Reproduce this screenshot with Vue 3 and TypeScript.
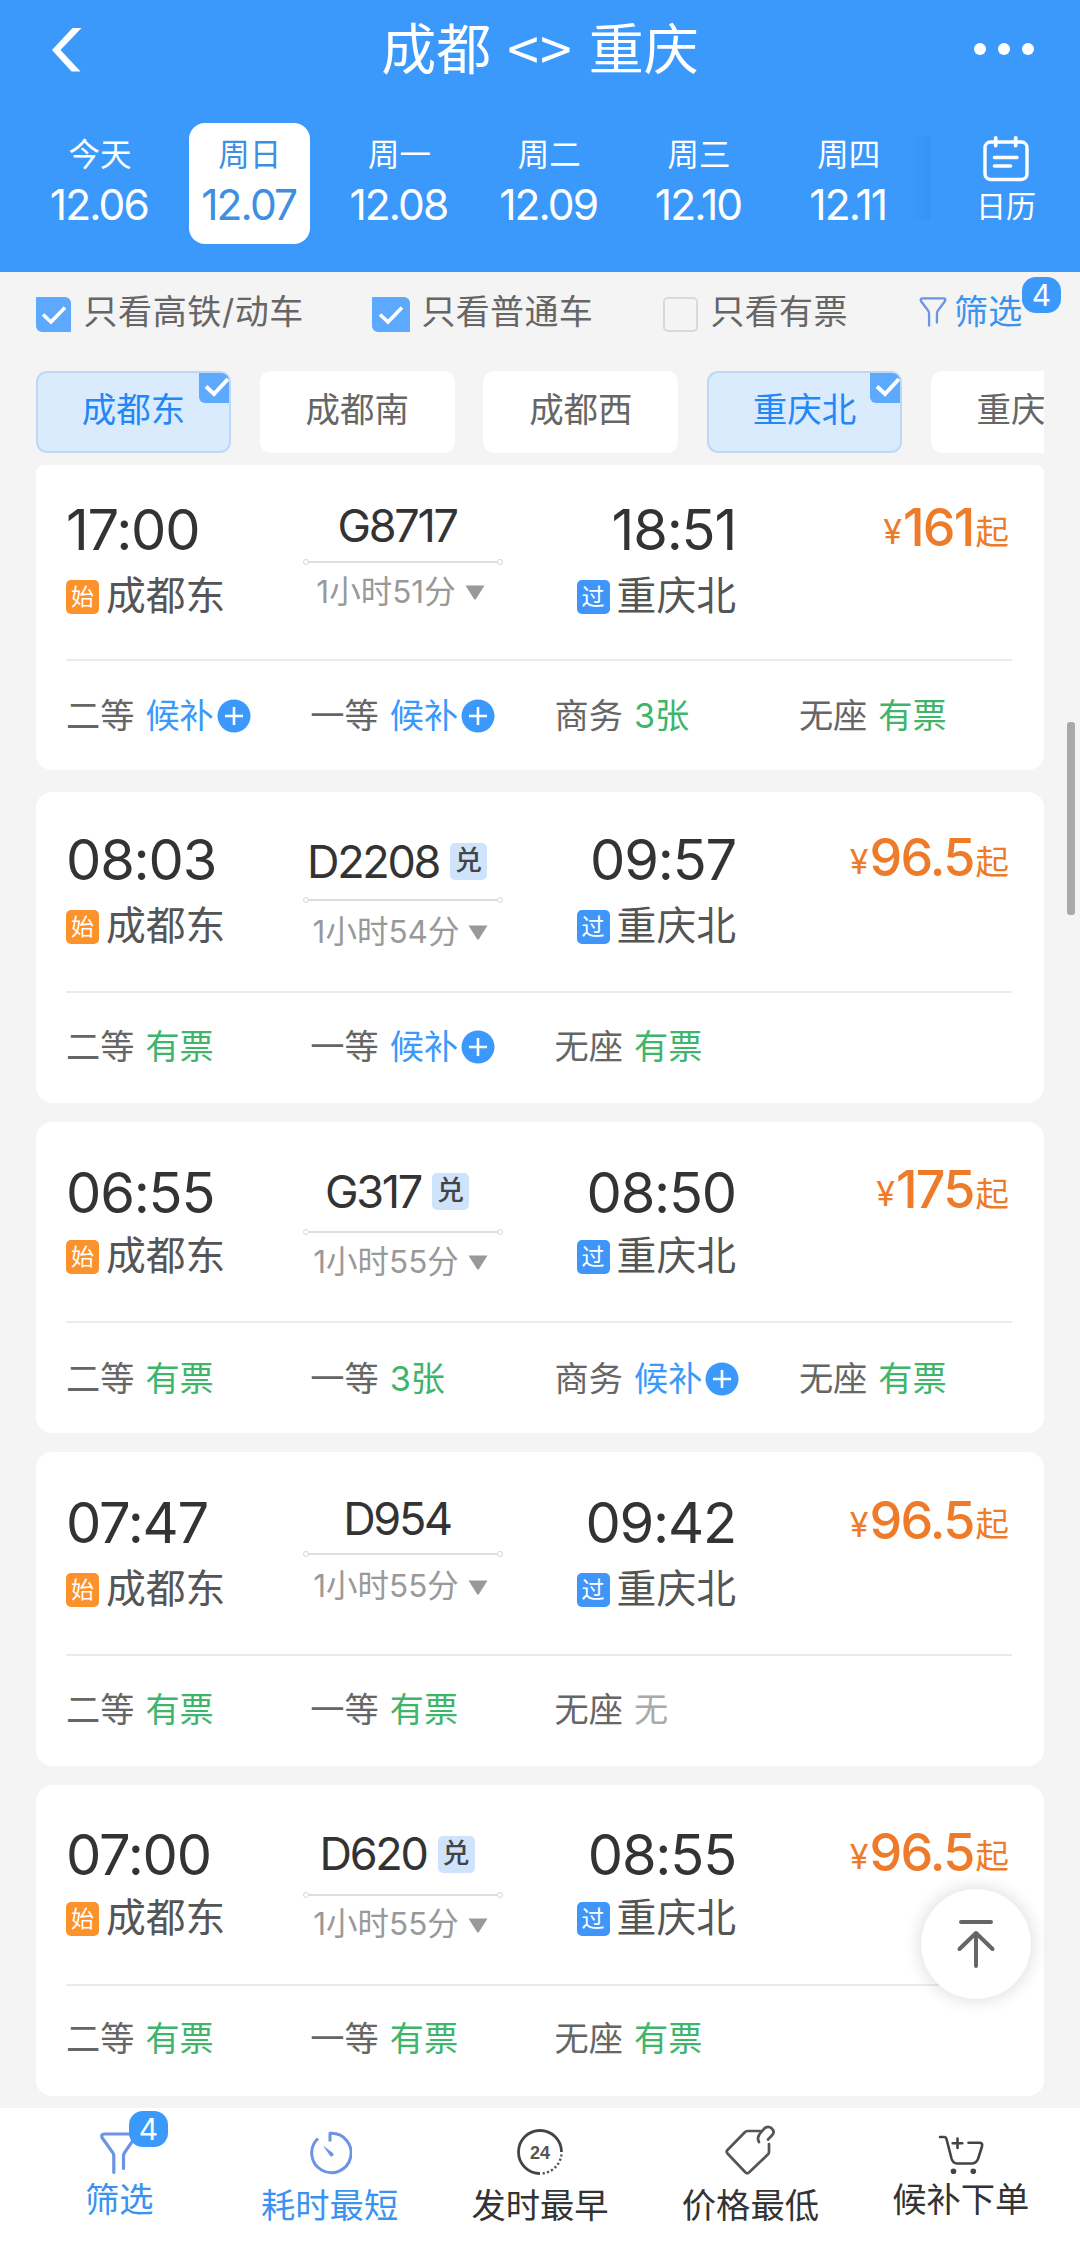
<script setup lang="ts">
interface Seat {
  name: string
  state: 'ok' | 'wait' | 'none'
  label: string
}
interface Train {
  code: string
  redeem: boolean
  depart: string
  arrive: string
  duration: string
  price: string
  seats: Seat[]
}

const ok = (name: string, label = '有票'): Seat => ({ name, state: 'ok', label })
const wait = (name: string): Seat => ({ name, state: 'wait', label: '候补' })
const none = (name: string): Seat => ({ name, state: 'none', label: '无' })

const days = [
  { week: '今天', date: '12.06' },
  { week: '周日', date: '12.07', active: true },
  { week: '周一', date: '12.08' },
  { week: '周二', date: '12.09' },
  { week: '周三', date: '12.10' },
  { week: '周四', date: '12.11' },
]

const stations = [
  { name: '成都东', active: true },
  { name: '成都南' },
  { name: '成都西' },
  { name: '重庆北', active: true },
  { name: '重庆西' },
]

const trains: Train[] = [
  { code: 'G8717', redeem: false, depart: '17:00', arrive: '18:51', duration: '1小时51分', price: '161', seats: [wait('二等'), wait('一等'), ok('商务', '3张'), ok('无座')] },
  { code: 'D2208', redeem: true, depart: '08:03', arrive: '09:57', duration: '1小时54分', price: '96.5', seats: [ok('二等'), wait('一等'), ok('无座')] },
  { code: 'G317', redeem: true, depart: '06:55', arrive: '08:50', duration: '1小时55分', price: '175', seats: [ok('二等'), ok('一等', '3张'), wait('商务'), ok('无座')] },
  { code: 'D954', redeem: false, depart: '07:47', arrive: '09:42', duration: '1小时55分', price: '96.5', seats: [ok('二等'), ok('一等'), none('无座')] },
  { code: 'D620', redeem: true, depart: '07:00', arrive: '08:55', duration: '1小时55分', price: '96.5', seats: [ok('二等'), ok('一等'), ok('无座')] },
]
</script>

<template>
  <div class="page">
    <header class="header">
      <div class="titlebar">
        <svg class="back" width="30" height="44" viewBox="0 0 30 44"><path d="M20.500 0H29.500L8.500 22 28.500 43.500H19.500L0 22z" fill="#fff" /></svg>
        <h1 class="title"><span>成都</span><span class="swap">&lt;&gt;</span><span>重庆</span></h1>
        <div class="more"><i /><i /><i /></div>
      </div>
      <div class="daybar">
        <div class="days">
          <div v-for="d in days" :key="d.date" class="day" :class="{ active: d.active }">
            <span class="week">{{ d.week }}</span>
            <span class="date">{{ d.date }}</span>
          </div>
        </div>
        <div class="edge" />
        <div class="calendar">
          <svg width="46" height="46" viewBox="0 0 46 46" fill="none" stroke="#fff" stroke-linecap="round">
            <rect x="2" y="6" width="42" height="37.500" rx="5.500" stroke-width="3.400" />
            <path d="M12.700 2v7.500M32.700 2v7.500" stroke-width="3.800" />
            <path d="M11.500 21.500H34M11.500 30H27.500" stroke-width="3.600" />
          </svg>
          <span>日历</span>
        </div>
      </div>
    </header>

    <div class="filters">
      <label class="option first"><span class="box on"><svg width="26" height="20" viewBox="0 0 26 20"><path d="M2 9.500 10 17 24 2.500" fill="none" stroke="#fff" stroke-width="3.600" /></svg></span>只看高铁/动车</label>
      <label class="option second"><span class="box on wide"><svg width="26" height="20" viewBox="0 0 26 20"><path d="M2 9.500 10 17 24 2.500" fill="none" stroke="#fff" stroke-width="3.600" /></svg></span>只看普通车</label>
      <label class="option third"><span class="box" />只看有票</label>
      <div class="filter-link">
        <svg width="28" height="30" viewBox="0 0 38 42" fill="none" stroke="#6b93e6" stroke-width="3.200" stroke-linecap="round" stroke-linejoin="round"><path d="M13.500 40V23Q13.500 21 12.300 19.300L2.300 6Q.500 2 4.500 2H33.500Q37.500 2 35.700 6L25.700 19.300Q24.500 21 24.500 23V36" /></svg>
        <span>筛选</span>
        <b class="count">4</b>
      </div>
    </div>

    <div class="chips">
      <div v-for="s in stations" :key="s.name" class="chip" :class="{ active: s.active }">
        {{ s.name }}
        <span v-if="s.active" class="corner"><svg width="25" height="20" viewBox="0 0 25 20"><path d="M2 8.500 10 16 24 1" fill="none" stroke="#fff" stroke-width="4" /></svg></span>
      </div>
    </div>

    <main class="list">
      <article v-for="t in trains" :key="t.code" class="card">
        <div class="trip">
          <div class="end depart">
            <div class="time">{{ t.depart }}</div>
            <div class="station"><span class="mark start">始</span>成都东</div>
          </div>
          <div class="middle">
            <div class="code">{{ t.code }}<span v-if="t.redeem" class="redeem">兑</span></div>
            <div class="rule"><i /><u /><i /></div>
            <div class="duration">{{ t.duration }}<svg width="20" height="15" viewBox="0 0 20 15"><path d="M.5.5h19L11 14q-1 1-2 0z" fill="#999" /></svg></div>
          </div>
          <div class="end arrive">
            <div class="time">{{ t.arrive }}</div>
            <div class="station"><span class="mark pass">过</span>重庆北</div>
          </div>
          <div class="price"><span class="yen">¥</span><span class="amount">{{ t.price }}</span><span class="from">起</span></div>
        </div>
        <div class="seats">
          <div v-for="s in t.seats" :key="s.name" class="seat">
            <span>{{ s.name }}</span>
            <span :class="s.state">{{ s.label }}</span>
            <svg v-if="s.state === 'wait'" width="34" height="34" viewBox="0 0 34 34"><circle cx="17" cy="17" r="16.500" fill="#3b99fc" /><path d="M17 8v18M8 17h18" stroke="#fff" stroke-width="2.600" /></svg>
          </div>
        </div>
      </article>
    </main>

    <nav class="tabbar">
      <div class="tab blue high">
        <svg width="38" height="43" viewBox="0 0 38 43" fill="none" stroke="#6b93e6" stroke-width="3.200" stroke-linecap="round" stroke-linejoin="round"><path d="M13.800 40.500V24Q13.800 22 12.600 20.300L2.300 6Q.500 2 4.500 2H32.500Q36.500 2 34.700 6L24.700 20.300Q23.500 22 23.500 24V36.500" /></svg>
        <span>筛选</span>
        <b class="count">4</b>
      </div>
      <div class="tab blue">
        <svg width="44" height="44" viewBox="0 0 44 44" fill="none" stroke="#6b93e6" stroke-width="3"><path d="M22 10.500V2.300A19.700 19.700 0 1 1 10 7.500" stroke-linejoin="round" /><path d="M15 14.500 25.500 22.500Q26 25.500 22.500 25.500Z" fill="#6b93e6" stroke="none" /></svg>
        <span>耗时最短</span>
      </div>
      <div class="tab">
        <svg width="46" height="46" viewBox="0 0 46 46"><path d="M23 44.500A21.500 21.500 0 1 1 44.500 23" fill="none" stroke="#444" stroke-width="2.800" /><path d="M44.500 25.500A21.500 21.500 0 0 1 24 44.500" fill="none" stroke="#555" stroke-width="2.400" stroke-dasharray="2.200 2.200" /><text x="23" y="29.500" text-anchor="middle" class="hours">24</text></svg>
        <span>发时最早</span>
      </div>
      <div class="tab">
        <svg width="50" height="50" viewBox="0 0 50 50" fill="none" stroke="#555" stroke-width="2.700" stroke-linecap="round" stroke-linejoin="round"><path d="M35.500 6H22.500Q21 6 19.800 7.200L2.500 25Q.800 26.800 2.500 28.500L20.500 47.500Q22.300 49 24 47.500L42.800 29.500Q44 28.500 44 27V19" /><path d="M34 17Q31.500 13 35 8.500L39 3.800Q42.500.200 46.500 3.200 50.200 6.500 47.300 10L43 14.500" /></svg>
        <span>价格最低</span>
      </div>
      <div class="tab high">
        <svg width="46" height="40" viewBox="0 0 46 40" fill="none" stroke="#444" stroke-width="2.600" stroke-linecap="round" stroke-linejoin="round"><path d="M2 2H6Q8 2 8.500 4L13.500 23.500Q15 28.500 19 28.500H33.500Q38 28.500 40 24L44 11.500Q45 7.800 41.500 7.800H30.500M19.500 3.500V13M14.700 8.200H24.300" /><circle cx="15.500" cy="36.300" r="2.800" fill="#444" stroke="none" /><circle cx="35.300" cy="36.300" r="2.800" fill="#444" stroke="none" /></svg>
        <span>候补下单</span>
      </div>
    </nav>

    <div class="to-top">
      <svg width="40" height="50" viewBox="0 0 40 50" fill="none" stroke="#666" stroke-width="4" stroke-linecap="round" stroke-linejoin="round"><path d="M5 3H35M20 14V47M3.500 30 20 14 36.500 30" /></svg>
    </div>
    <div class="scrollbar" />
  </div>
</template>

<style>
body {
  margin: 0;
  background: #f4f4f4;
}
</style>

<style scoped>
.page {
  position: relative;
  display: flex;
  flex-direction: column;
  width: 1080px;
  height: 2245px;
  overflow: hidden;
  background: #f4f4f4;
  color: #555;
  font-family: Inter, "Noto Sans CJK SC", sans-serif;
  white-space: nowrap;
}
.page * { box-sizing: border-box; }
svg { display: block; flex: none; }

.header { flex: none; height: 272px; background: #3b99fc; color: #fff; }
.titlebar { display: flex; align-items: center; height: 98px; padding: 0 46px 0 52px; }
.back { margin-top: 1px; }
.title { display: flex; flex: 1; justify-content: center; gap: 16px; margin: 0 0 0 24px; font-size: 55px; font-weight: 400; line-height: 60px; }
.swap { font-family: "Noto Sans CJK SC", sans-serif; font-size: 57px; line-height: 55px; letter-spacing: 1px; }
.more { display: flex; gap: 12px; }
.more i { width: 12px; height: 12px; border-radius: 50%; background: #fff; }
.daybar { display: flex; padding-top: 25px; }
.days { display: flex; flex: none; width: 899px; margin-left: 25px; }
.day { display: flex; flex-direction: column; align-items: center; width: 121px; height: 121px; margin: 0 14.400px; border-radius: 16px; }
.day.active { background: #fff; color: #3e8fdf; }
.week { margin-top: 16px; font-size: 31.500px; line-height: 32px; }
.date { margin: 12px 2px 0 0; font-size: 42.500px; line-height: 44px; letter-spacing: -1.900px; }
.edge { flex: none; width: 18px; height: 84px; margin: 13px 0 0 -12px; background: linear-gradient(to right, rgba(40, 120, 215, 0), rgba(40, 120, 215, .2)); }
.calendar { display: flex; flex-direction: column; align-items: center; width: 106px; margin: 13px 0 0 23px; font-size: 30px; line-height: 32px; }
.calendar span { margin-top: 8px; }

.filters { display: flex; align-items: center; flex: none; height: 80px; padding: 0 18px 0 36px; font-size: 34px; line-height: 40px; letter-spacing: .300px; color: #666; margin-bottom: 19px; }
.option { display: flex; align-items: center; flex: none; }
.option.first { width: 336px; letter-spacing: .600px; }
.option.second { width: 291px; }
.option.third { width: 257px; }
.box { display: flex; align-items: center; justify-content: center; flex: none; width: 35px; height: 35px; margin: 5px 12.500px 0 0; border: 2px solid #d9d9d9; border-radius: 5px; }
.box.on { border: 0; border-radius: 1px 6px 1px 6px; background: #5ca9fd; }
.box.wide { width: 38px; margin-right: 11.500px; }
.count { display: flex; align-items: center; justify-content: center; width: 39px; height: 36px; border-radius: 14px; background: #3b99fc; color: #fff; font-size: 30px; font-weight: 400; line-height: 34px; }
.filter-link { position: relative; display: flex; align-items: center; gap: 7px; margin-left: -1px; color: #3b93ee; }
.filter-link .count { position: absolute; left: 103px; top: -15px; }

.chips { display: flex; flex: none; gap: 28.700px; width: 1008px; height: 82px; margin: 0 0 12px 36px; overflow: hidden; }
.chip { position: relative; flex: none; width: 195px; height: 82px; border-radius: 11px; background: #fff; color: #666; font-size: 34.500px; line-height: 77px; text-align: center; }
.chip.active { border: 2px solid #bdd8f5; background: #dbebfe; color: #2387f5; line-height: 73px; }
.corner { position: absolute; top: 0; right: 0; width: 30px; height: 30px; padding: 5px 0 0 5px; border-radius: 0 8px 0 6px; background: #5ca9fd; overflow: hidden; }

.list { flex: 1; min-height: 0; overflow: hidden; padding: 0 36px; }
.card { --time: 70.500px; --code: 69.500px; --rule: 110px; --dur: 139.500px; --stop: 134px; --price: 69px; --trip: 201px; --seat: 53.500px; --end: 110px; margin-bottom: 19px; border-radius: 16px; background: #fff; }
.card:nth-child(1) { --time: 65.300px; --code: 60.600px; --rule: 97px; --dur: 127px; --stop: 131.500px; --price: 64px; --trip: 196px; --seat: 55px; --end: 109px; margin-bottom: 22px; border-radius: 8px 8px 16px 16px; }
.card:nth-child(2) { --time: 68px; --rule: 108px; --price: 67px; }
.card:nth-child(3) { --trip: 200.500px; --seat: 56.500px; --end: 110px; }
.card:nth-child(4) { --time: 71px; --code: 67.500px; --rule: 102.500px; --dur: 134.500px; --stop: 137px; --price: 70px; --trip: 204.500px; --end: 109.500px; }
.card:nth-child(5) { --stop: 133.500px; }
.trip { display: flex; height: var(--trip); margin: 0 32px 0 30px; border-bottom: 2px solid #ebebeb; }
.end { display: flex; flex-direction: column; flex: none; padding-top: calc(var(--time) - 28px); }
.depart { width: 237px; }
.arrive { width: 233px; align-items: flex-end; }
.time { height: 56px; color: #333; font-size: 56px; line-height: 56px; letter-spacing: -1.200px; }
.station { display: flex; align-items: center; height: 40px; margin-top: calc(var(--stop) - var(--time) - 48px); font-size: 39.800px; line-height: 40px; }
.mark { width: 33px; height: 34px; margin: 2px 7px 0 0; border-radius: 5px; color: #fff; font-size: 23px; line-height: 35px; text-align: center; }
.start { background: #fb922c; }
.pass { background: #3f96f8; }
.middle { display: flex; flex-direction: column; align-items: center; flex: none; width: 200px; padding-top: calc(var(--code) - 22px); }
.code { display: flex; align-items: center; gap: 11px; height: 44px; margin-left: -12px; color: #333; font-size: 45px; line-height: 44px; letter-spacing: -2.300px; }
.redeem { width: 37px; height: 37px; border-radius: 5px; background: #cfe3fc; color: #444; font-size: 27px; font-weight: 500; line-height: 36px; letter-spacing: 0; text-align: center; }
.rule { display: flex; align-items: center; flex: none; width: 200px; height: 6px; margin-top: calc(var(--rule) - var(--code) - 25px); }
.rule i { width: 6px; height: 6px; border: 1.500px solid #d6d6d6; border-radius: 50%; }
.rule u { flex: 1; height: 2px; background: #dedede; }
.duration { display: flex; align-items: center; gap: 9px; height: 32px; margin: calc(var(--dur) - var(--rule) - 19px) 0 0 -5px; color: #999; font-size: 31.500px; line-height: 32px; }
.duration svg { margin-top: 2px; }
.price { display: flex; align-items: center; justify-content: flex-end; flex: 1; height: 52px; margin-top: calc(var(--price) - 27px); padding-right: 3px; color: #ee7b2a; line-height: 52px; }
.yen { margin-top: 8px; font-size: 34px; }
.amount { margin: 0 2px 0 1px; font-size: 52px; font-weight: 450; letter-spacing: -1.800px; }
.from { margin-top: 7px; font-size: 33.500px; }
.seats { display: flex; height: var(--end); padding: calc(var(--seat) - 17px) 0 0 30px; font-size: 34.200px; line-height: 34px; color: #666; }
.seat { display: flex; flex: none; gap: 11px; width: 244.300px; height: 34px; }
.seat svg { margin-left: -8px; }
.ok { color: #3fb56b; }
.wait { color: #3b99fc; }
.none { color: #aaa; }

.tabbar { display: flex; flex: none; height: 137px; padding: 0 14px; background: #fff; color: #333; font-size: 34.300px; line-height: 36px; }
.tab { position: relative; display: flex; flex: 1; flex-direction: column; align-items: center; justify-content: flex-end; padding-bottom: 21px; }
.tab svg { margin-bottom: 13px; }
.tab.high { padding-bottom: 27px; }
.tab.high svg { margin-bottom: 7px; }
.tab.blue { color: #3b93ee; }
.tab .count { position: absolute; left: 115px; top: 3px; }
.hours { font: bold 18px "Liberation Sans", sans-serif; fill: #555; }

.to-top { position: absolute; left: 921px; top: 1889px; display: flex; align-items: center; justify-content: center; width: 110px; height: 110px; border-radius: 50%; background: #fff; box-shadow: 0 0 18px rgba(0, 0, 0, .16); }
.scrollbar { position: absolute; left: 1067px; top: 722px; width: 8px; height: 193px; border-radius: 3px; background: #a9a9a9; }
</style>
